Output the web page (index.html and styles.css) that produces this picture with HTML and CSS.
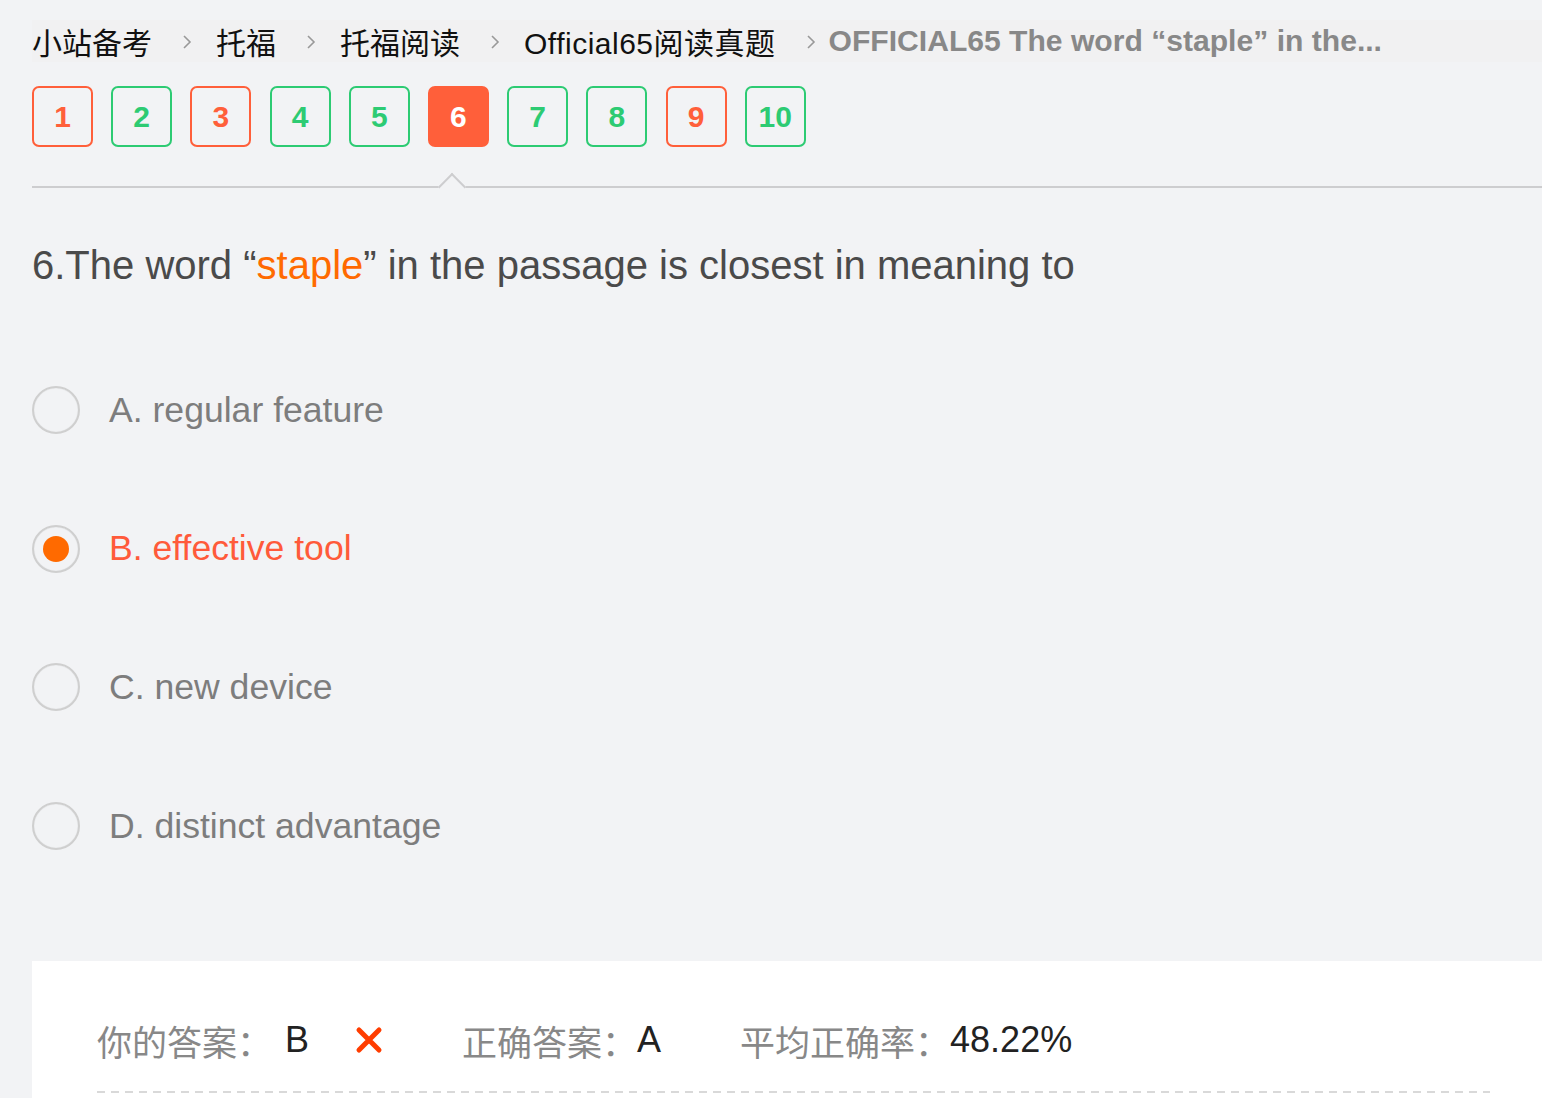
FILE: index.html
```html
<!DOCTYPE html>
<html lang="zh-CN">
<head>
<meta charset="utf-8">
<title>OFFICIAL65 The word “staple”</title>
<link rel="stylesheet" href="styles.css">
</head>
<body>
<div class="page">
  <nav class="crumbs">
    <a class="crumb">小站备考</a><svg class="sep" viewBox="0 0 10 16" width="10" height="16"><path d="M2 2 L8 8 L2 14" stroke="#999" stroke-width="1.6" fill="none"/></svg>
    <a class="crumb">托福</a><svg class="sep" viewBox="0 0 10 16" width="10" height="16"><path d="M2 2 L8 8 L2 14" stroke="#999" stroke-width="1.6" fill="none"/></svg>
    <a class="crumb">托福阅读</a><svg class="sep" viewBox="0 0 10 16" width="10" height="16"><path d="M2 2 L8 8 L2 14" stroke="#999" stroke-width="1.6" fill="none"/></svg>
    <a class="crumb">Official65阅读真题</a><svg class="sep sep-last" viewBox="0 0 10 16" width="10" height="16"><path d="M2 2 L8 8 L2 14" stroke="#999" stroke-width="1.6" fill="none"/></svg>
    <span class="crumb current">OFFICIAL65 The word “staple” in the...</span>
  </nav>

  <div class="nums">
    <span class="num wrong">1</span>
    <span class="num right">2</span>
    <span class="num wrong">3</span>
    <span class="num right">4</span>
    <span class="num right">5</span>
    <span class="num active">6</span>
    <span class="num right">7</span>
    <span class="num right">8</span>
    <span class="num wrong">9</span>
    <span class="num right">10</span>
  </div>

  <div class="divider"><span class="caret"></span></div>

  <h1 class="question">6.The word “<span class="hl">staple</span>” in the passage is closest in meaning to</h1>

  <ul class="options">
    <li class="option"><span class="radio"></span><span class="label">A. regular feature</span></li>
    <li class="option selected"><span class="radio"></span><span class="label">B. effective tool</span></li>
    <li class="option"><span class="radio"></span><span class="label">C. new device</span></li>
    <li class="option"><span class="radio"></span><span class="label">D. distinct advantage</span></li>
  </ul>

  <section class="result">
    <div class="result-row">
      <span class="key">你的答案：</span><span class="val val-mine">B</span>
      <svg class="cross" viewBox="0 0 28 28" width="28" height="28"><path d="M4 4 L24 24 M24 4 L4 24" stroke="#ff3d00" stroke-width="5" stroke-linecap="round" fill="none"/></svg>
      <span class="key">正确答案：</span><span class="val val-right">A</span>
      <span class="key key-avg">平均正确率：</span><span class="val">48.22%</span>
    </div>
  </section>
</div>
</body>
</html>
```

FILE: styles.css
```css
* { box-sizing: border-box; }
html, body {
  margin: 0;
  padding: 0;
  background: #f2f3f5;
}
body {
  font-family: "Liberation Sans", Arial, "Noto Sans CJK SC", sans-serif;
  color: #222;
  overflow: hidden;
  height: 1098px;
}
.page {
  padding: 20px 0 0 32px;
}

/* breadcrumbs */
.crumbs {
  display: flex;
  align-items: center;
  height: 42px;
  background: #f1f1f2;
  font-size: 30px;
  white-space: nowrap;
}
.crumb {
  color: #111;
  text-decoration: none;
}
.crumb:nth-of-type(4) { letter-spacing: 0.5px; }
.sep {
  flex: none;
  margin: 2px 24px 0 30px;
}
.sep-last { margin-right: 13px; }
.current {
  color: #888;
  font-weight: bold;
  font-size: 30.1px;
}

/* number boxes */
.nums {
  display: flex;
  gap: 18.2px;
  margin-top: 24px;
}
.num {
  width: 61px;
  height: 61px;
  border: 2px solid;
  border-radius: 7px;
  display: flex;
  align-items: center;
  justify-content: center;
  font-weight: bold;
  font-size: 30px;
}
.num.wrong { border-color: #ff5f3a; color: #ff5f3a; }
.num.right { border-color: #2dcb73; color: #2dcb73; }
.num.active { border-color: #ff5f3a; background: #ff5f3a; color: #fff; }

/* divider with caret */
.divider {
  position: relative;
  margin-top: 39px;
  height: 2px;
  background: #cdcdcf;
}
.caret {
  position: absolute;
  left: 410px;
  top: -9px;
  width: 20px;
  height: 20px;
  background: #f2f3f5;
  border-top: 2px solid #cdcdcf;
  border-left: 2px solid #cdcdcf;
  transform: rotate(45deg);
}

/* question */
.question {
  margin: 47px 0 0;
  font-weight: normal;
  font-size: 40px;
  line-height: 60px;
  color: #4a4a4a;
}
.hl { color: #ff6a00; }

/* options */
.options {
  list-style: none;
  margin: 46px 0 0;
  padding: 0;
}
.option {
  display: flex;
  align-items: center;
  height: 138.6px;
}
.radio {
  width: 48px;
  height: 48px;
  border-radius: 50%;
  border: 2px solid #cfcfcf;
  box-shadow: inset 0 0 1px rgba(0,0,0,0.15);
  display: flex;
  align-items: center;
  justify-content: center;
  flex: none;
}
.option.selected .radio::after {
  content: "";
  width: 26px;
  height: 26px;
  border-radius: 50%;
  background: #ff6a00;
}
.label {
  margin-left: 29px;
  font-size: 35.6px;
  color: #7d7d7d;
}
.option.selected .label { color: #ff5a3a; }

/* result panel */
.result {
  margin-top: 66px;
  background: #fff;
  padding: 40px 52px 0 65px;
  height: 200px;
}
.result-row {
  display: flex;
  align-items: center;
  height: 92px;
  padding-bottom: 14px;
  background-image: repeating-linear-gradient(to right, #d9d9d9 0 8px, transparent 8px 14px);
  background-size: 100% 2px;
  background-position: left bottom;
  background-repeat: no-repeat;
}
.key {
  color: #888;
  font-family: "Noto Sans CJK SC", sans-serif;
  font-size: 35px;
  flex: none;
}
.val {
  color: #222;
  font-size: 36px;
}
.val-mine { margin-left: 13px; }
.cross {
  flex: none;
  margin-left: 46px;
  margin-right: 79px;
}
.key-avg { margin-left: 79px; }
```
